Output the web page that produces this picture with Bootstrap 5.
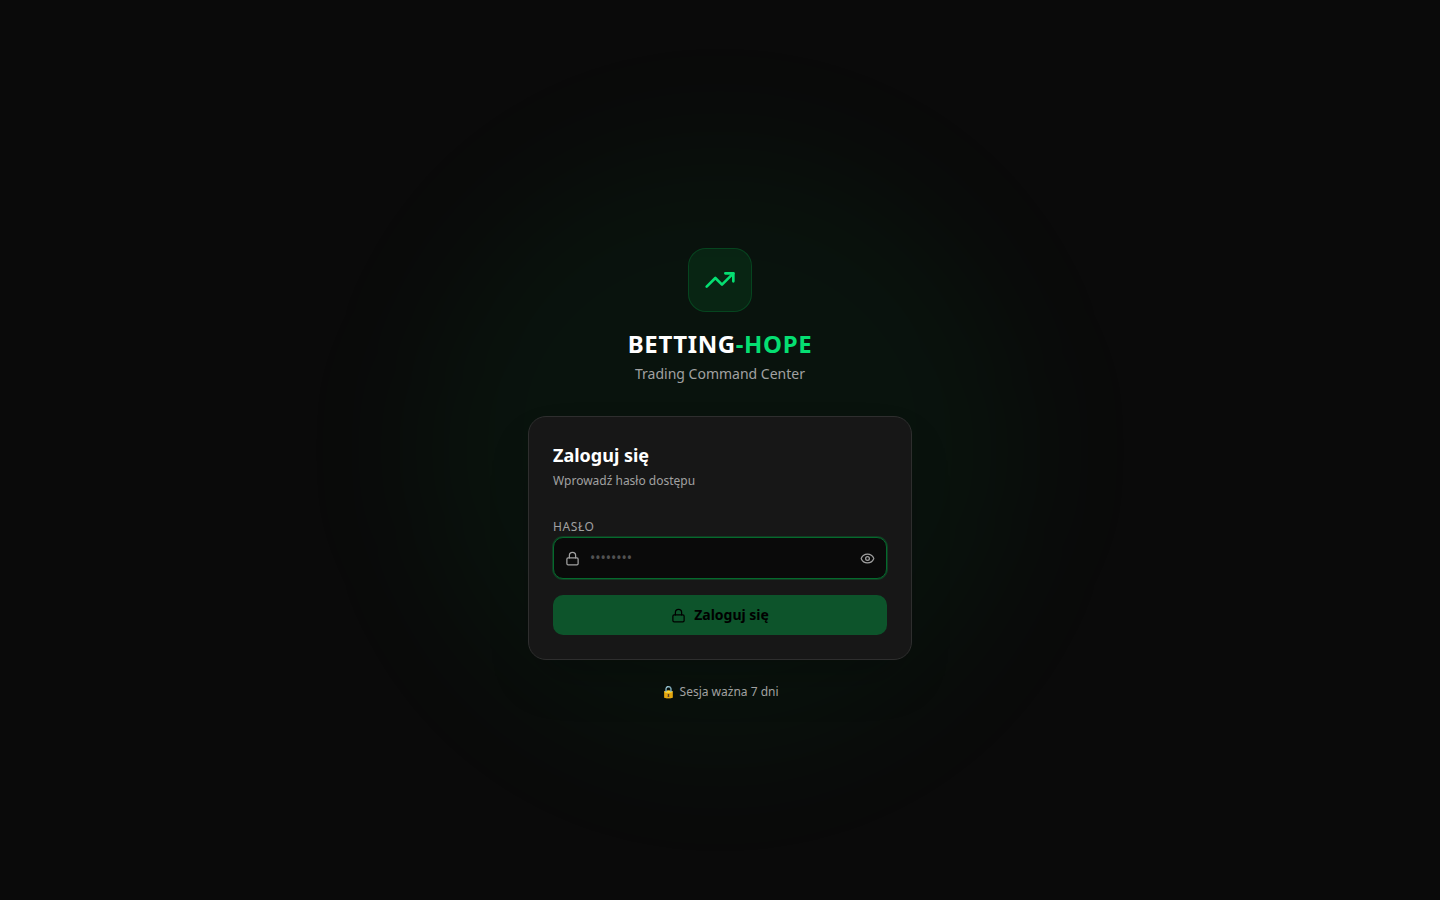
<!DOCTYPE html>
<html lang="pl" data-bs-theme="dark">
<head>
<meta charset="utf-8">
<meta name="viewport" content="width=device-width, initial-scale=1">
<title>Betting-Hope</title>
<link href="https://cdn.jsdelivr.net/npm/bootstrap@5.3.0/dist/css/bootstrap.min.css" rel="stylesheet">
<style>
  body { background: #0a0a0a; font-family: "Noto Sans", sans-serif; font-size: 14px; line-height: 20px; color: #fff; }
  .login-page { padding: 48px 16px 0; background: #0a0a0a; }
  .glow { width: 600px; height: 600px; border-radius: 50%; background: rgba(0, 201, 80, .05); filter: blur(64px); }
  .login-column { max-width: 384px; }
  .logo-tile { width: 64px; height: 64px; border: 1px solid rgba(0, 201, 80, .2); border-radius: 18px; background: rgba(0, 201, 80, .1); }
  .accent { color: #05df72; }
  .muted { color: #a1a1a1; }
  .brand-name { font-size: 24px; line-height: 32px; letter-spacing: .025em; }
  .login-card { background: #171717; border: 1px solid #2e2e2e; border-radius: 18px; box-shadow: 0 24px 48px -12px rgba(0, 0, 0, .25); }
  .login-heading { font-size: 18px; line-height: 28px; }
  .fine-print { font-size: 12px; line-height: 16px; }
  .field-label { padding-top: 4px; font-size: 12px; line-height: 20px; letter-spacing: .05em; }
  .password-field { height: 42px; padding: 0 11px; background: #0a0a0a; border: 1px solid #056a2d; border-radius: 10px; box-shadow: 0 0 0 1px rgba(0, 201, 80, .2); }
  .password-field input { padding: 0 10px; font-size: 14px; line-height: 20px; color: #fff; }
  .password-field input::placeholder { color: #525252; opacity: 1; }
  .submit-button { height: 40px; border: 0; border-radius: 10px; background: #0d542b; color: #000; font-size: 14px; line-height: 20px; }
  .submit-button:hover { background: #00a63e; color: #000; }
</style>
</head>
<body>
<main class="login-page position-relative overflow-hidden min-vh-100 d-flex align-items-center justify-content-center">
  <div class="glow position-absolute top-50 start-50 translate-middle"></div>
  <div class="login-column position-relative w-100">
    <header class="text-center mb-4 pb-2">
      <div class="logo-tile d-inline-flex align-items-center justify-content-center mb-3 align-top">
        <svg class="accent" width="32" height="32" viewBox="0 0 24 24" fill="none" stroke="currentColor" stroke-width="2" stroke-linecap="round" stroke-linejoin="round" aria-hidden="true"><path d="M22 7 13.5 15.5 8.500 10.500 2 17"/><path d="M16 7h6v6"/></svg>
      </div>
      <h1 class="brand-name fw-bold mb-1">BETTING<span class="accent">-HOPE</span></h1>
      <p class="muted mb-0">Trading Command Center</p>
    </header>
    <section class="login-card p-4">
      <h2 class="login-heading fw-bold mb-1">Zaloguj się</h2>
      <p class="fine-print muted mb-4">Wprowadź hasło dostępu</p>
      <form>
        <label class="field-label muted d-block" for="password">HASŁO</label>
        <div class="password-field d-flex align-items-center mb-3">
          <svg class="muted flex-shrink-0" width="15" height="15" viewBox="0 0 24 24" fill="none" stroke="currentColor" stroke-width="2" stroke-linecap="round" stroke-linejoin="round" aria-hidden="true"><rect x="3" y="11" width="18" height="11" rx="2"/><path d="M7 11V7a5 5 0 0 1 10 0v4"/></svg>
          <input class="form-control border-0 bg-transparent shadow-none" id="password" type="password" placeholder="••••••••" autocomplete="current-password">
          <button class="btn border-0 p-0 muted d-flex flex-shrink-0" type="button" aria-label="Pokaż hasło">
            <svg width="15" height="15" viewBox="0 0 24 24" fill="none" stroke="currentColor" stroke-width="2" stroke-linecap="round" stroke-linejoin="round" aria-hidden="true"><path d="M2.062 12.348a1 1 0 0 1 0-.696 10.750 10.750 0 0 1 19.876 0 1 1 0 0 1 0 .696 10.750 10.750 0 0 1-19.876 0"/><circle cx="12" cy="12" r="3"/></svg>
          </button>
        </div>
        <button class="submit-button btn w-100 p-0 fw-bold d-flex align-items-center justify-content-center gap-2" type="submit">
          <svg width="15" height="15" viewBox="0 0 24 24" fill="none" stroke="currentColor" stroke-width="2" stroke-linecap="round" stroke-linejoin="round" aria-hidden="true"><rect x="3" y="11" width="18" height="11" rx="2"/><path d="M7 11V7a5 5 0 0 1 10 0v4"/></svg>
          Zaloguj się
        </button>
      </form>
    </section>
    <p class="fine-print muted text-center mt-4 mb-0">🔒 Sesja ważna 7 dni</p>
  </div>
</main>
<script src="https://cdn.jsdelivr.net/npm/bootstrap@5.3.0/dist/js/bootstrap.bundle.min.js"></script>
</body>
</html>
